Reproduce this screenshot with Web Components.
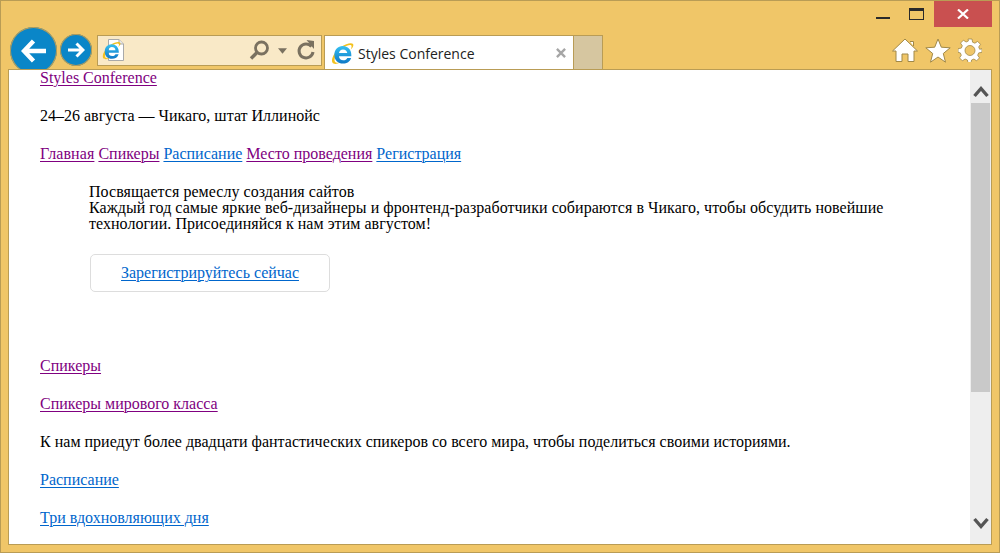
<!DOCTYPE html>
<html lang="ru"><head><meta charset="utf-8"><title>Styles Conference</title>
<style>html,body{margin:0;padding:0;background:#f0c668}</style></head>
<body>
<ie-window>
  <caption-buttons slot="caption"></caption-buttons>
  <nav-buttons slot="nav"></nav-buttons>
  <address-box slot="nav"></address-box>
  <tab-strip slot="nav" label="Styles Conference"></tab-strip>
  <tool-icons slot="nav"></tool-icons>
  <page-content slot="page"></page-content>
  <v-scrollbar slot="page"></v-scrollbar>
</ie-window>
<script>
const IE_LOGO = `<svg viewBox="0 0 24 24" width="WW" height="WW" aria-hidden="true">
<defs><linearGradient id="g" x1="0" y1="0" x2="0" y2="1"><stop offset="0" stop-color="#35c0f2"/><stop offset="1" stop-color="#0e78c6"/></linearGradient></defs>
<path d="M23 2.200C21.500 .3 16 1.500 10 5.500 4 9.800-.5 18 1.500 21.500c1.300 2.200 5 1.800 8 0-3 .5-5.200.1-5.700-1.700C3 16.500 7 10 12 6.500c4.500-3.300 8-3.900 9-3.100.8.6.5 2.600-.5 4.600 2-2 3.500-4.300 2.500-5.800z" fill="#f3c11c"/>
<path d="M12.200 4.200c5.300 0 9 3.900 9 9.300v1.300H8.300c.2 2.700 2 4.200 4.500 4.200 2 0 3.500-.9 4.200-2.400h4c-1.100 3.700-4.300 5.900-8.400 5.900-5.400 0-9.100-3.700-9.100-9 0-5.600 3.700-9.300 8.700-9.300zm4.800 7.400c-.2-2.300-2-3.900-4.500-3.900-2.300 0-3.900 1.500-4.200 3.900z" fill="url(#g)" fill-rule="evenodd"/>
</svg>`;
function def(name, html, init){
  customElements.define(name, class extends HTMLElement{
    constructor(){super();this.attachShadow({mode:'open'}).innerHTML=html;}
    connectedCallback(){ if(init) init(this); }
  });
}
def('ie-window',`<style>
:host{display:flex;flex-direction:column;box-sizing:border-box;width:1000px;height:553px;background:#f0c668;border:1px solid #b99c55;overflow:hidden;padding:0 7px 7px 7px}
.cap{display:flex;justify-content:flex-end;height:26px;flex:none}
.nav{display:flex;align-items:flex-start;height:42px;flex:none;position:relative}
.page{display:flex;flex:1;min-height:0;background:#fff;border:1px solid #b99c55;position:relative;z-index:1}
</style>
<div class="cap"><slot name="caption"></slot></div>
<div class="nav"><slot name="nav"></slot></div>
<div class="page"><slot name="page"></slot></div>`);

def('caption-buttons',`<style>
:host{display:flex;align-items:flex-start}
.b{height:26px;display:flex;align-items:center;justify-content:center}
.min{width:30px}.max{width:36px}.close{width:58px;background:#c95050}
svg{display:block}
</style>
<div class="b min"><svg width="14" height="14" viewBox="0 0 14 14"><rect y="10" width="14" height="2" fill="#2a2a2a"/></svg></div>
<div class="b max"><svg width="15" height="13" viewBox="0 0 15 13"><rect x=".5" y=".5" width="14" height="11" fill="none" stroke="#2a2a2a"/><rect width="15" height="3" fill="#2a2a2a"/></svg></div>
<div class="b close"><svg width="12" height="10" viewBox="0 0 12 10" style="margin-top:-1px"><path d="M1 .5 11 9.500M11 .5 1 9.500" stroke="#fff" stroke-width="2.200" fill="none"/></svg></div>`);

def('nav-buttons',`<style>
:host{display:flex;align-items:flex-start;flex:none;padding-left:2px;height:42px;width:89px;box-sizing:border-box}
.c{border-radius:50%;background:#0a86c8;box-shadow:0 0 0 1px #b99c55 inset;display:flex;align-items:center;justify-content:center;flex:none;box-sizing:border-box}
.back{width:47px;height:47px}
.fwd{width:32px;height:32px;margin:7px 0 0 3px}
svg{display:block}
</style>
<div class="c back"><svg width="26" height="24" viewBox="0 0 26 24"><path d="M12.500 2 3 12l9.500 10M3.500 12H25" fill="none" stroke="#fff" stroke-width="4.500"/></svg></div>
<div class="c fwd"><svg width="18" height="16" viewBox="0 0 18 16"><path d="M9.500 1.500 16 8l-6.500 6.500M16 8H1" fill="none" stroke="#fff" stroke-width="3"/></svg></div>`);

def('address-box',`<style>
:host{display:flex;align-items:center;flex:none;box-sizing:border-box;width:225px;height:31px;margin-top:8px;background:#f9e9c7;border:1px solid #b99c55;padding:0 5px 0 4px}
.page{position:relative;width:23px;height:25px;flex:none}
.sp{flex:1}
svg{display:block}
.s{margin-right:8px}.a{margin-right:9px}
</style>
<div class="page">
<svg width="23" height="25" viewBox="0 0 23 25"><path d="M6.500 1.500H17l4.500 4.500v16.500h-15z" fill="#fff" stroke="#a9a9a9"/><path d="M17 1.500V6h4.500" fill="#e8e8e8" stroke="#a9a9a9"/></svg>
<span id="l" style="position:absolute;left:0;top:3px"></span></div>
<div class="sp"></div>
<svg class="s" width="21" height="21" viewBox="0 0 21 21"><circle cx="12.500" cy="8" r="6" fill="none" stroke="#7a7160" stroke-width="2.800"/><path d="M8 12.500 2 18.500" stroke="#7a7160" stroke-width="3.400"/></svg>
<svg class="a" width="9" height="6" viewBox="0 0 10 6"><path d="M0 0h10L5 6z" fill="#7a7160"/></svg>
<svg width="20" height="22" viewBox="0 0 20 22"><path d="M15.500 6.500A7 7 0 1 0 17 12" fill="none" stroke="#7a7160" stroke-width="3"/><path d="M10.500 0 18 1v8z" fill="#7a7160"/></svg>`,
el=>{el.shadowRoot.getElementById('l').innerHTML=IE_LOGO.replace(/WW/g,'19');});

def('tab-strip',`<style>
:host{display:flex;flex:none;margin:8px 0 0 2px;height:35px;font:14px "Open Sans","Noto Sans",sans-serif;color:#222}
.tab{box-sizing:border-box;width:250px;height:35px;background:#fff;border:1px solid #b99c55;border-bottom:0;display:flex;align-items:center;padding:0 7px 0 6px}
.logo{flex:none;width:23px;height:23px;margin-right:4px}
.t{flex:1;white-space:nowrap}
.new{box-sizing:border-box;width:29px;height:35px;background:#d6c6a0;border:1px solid #b99c55;border-left:0;border-bottom:0}
svg{display:block}
</style>
<div class="tab"><span class="logo" id="l"></span><span class="t" id="t"></span>
<svg width="10" height="10" viewBox="0 0 11 11"><path d="M1 1l9 9M10 1l-9 9" stroke="#a6a6a6" stroke-width="2.600"/></svg></div>
<div class="new"></div>`,
el=>{el.shadowRoot.getElementById('l').innerHTML=IE_LOGO.replace(/WW/g,'23');
el.shadowRoot.getElementById('t').textContent=el.getAttribute('label');});

def('tool-icons',`<style>
:host{display:flex;flex:1;justify-content:flex-end;align-items:center;gap:7px;height:34px;margin-top:6px;padding-right:10px}
svg{display:block}
</style>
<svg width="26" height="25" viewBox="0 0 26 25"><path d="M13 1 25.500 13H22v10.500h-6V16h-6v7.500H4V13H.5zM18 3.500h3.500V8" fill="#fff" stroke="#a08848" stroke-width="1"/></svg>
<svg width="26" height="25" viewBox="0 0 26 25"><path d="M13 1l3.300 8.200 8.900.6-6.900 5.700 2.200 8.700L13 19l-7.500 5.200 2.200-8.700L.8 9.800l8.900-.6z" fill="#fff" stroke="#a08848" stroke-width="1"/></svg>
<svg width="24" height="24" viewBox="0 0 24 24"><path fill-rule="evenodd" d="M10 1h4l.6 3.200 2.300 1 2.700-1.800 2.900 2.900-1.800 2.700 1 2.300L24 10.700v3.600l-3.300.6-1 2.300 1.800 2.700-2.900 2.900-2.700-1.800-2.300 1-.6 3H10l-.6-3-2.300-1-2.700 1.800-2.900-2.900 1.800-2.700-1-2.300L0 14.300v-3.600l3.300-.6 1-2.300L2.500 5.100l2.900-2.900 2.700 1.800 2.300-1zM12 7.500a5 5 0 1 0 0 10 5 5 0 0 0 0-10z" fill="#fff" stroke="#a08848" stroke-width=".8"/></svg>`);

def('page-content',`<style>
:host{display:block;flex:1;min-width:0;overflow:hidden;padding:0 0 0 31px;font:16px/18px "Liberation Serif","Times New Roman",serif;color:#000}
a{text-decoration:underline;text-underline-offset:2px;text-decoration-thickness:1px}
.v{color:#800080}.l{color:#0066cc}
p{margin:0 0 20px}
.top{margin-top:-1px}
.first{letter-spacing:.1px}
.hero{margin:21px 48px 0 49px;line-height:16px;letter-spacing:.04px}
.hero p{margin:0}
.cta{display:flex;justify-content:center;box-sizing:border-box;width:240px;height:38px;margin:22px 0 0 1px;border:1px solid #ddd;border-radius:5px;align-items:center;line-height:18px;letter-spacing:-.03px}
.gap{height:65px}
.wide{letter-spacing:.01px}
</style>
<p class="top"><a class="v" href="#">Styles Conference</a></p>
<p>24–26 августа — Чикаго, штат Иллинойс</p>
<p style="margin-bottom:0"><a class="v first" href="#">Главная</a> <a class="v" href="#">Спикеры</a> <a class="l" href="#">Расписание</a> <a class="v" href="#">Место проведения</a> <a class="l" href="#">Регистрация</a></p>
<div class="hero"><p>Посвящается ремеслу создания сайтов</p><p>Каждый год самые яркие веб-дизайнеры и фронтенд-разработчики собираются в Чикаго, чтобы обсудить новейшие технологии. Присоединяйся к нам этим августом!</p>
<div class="cta"><a class="l" href="#">Зарегистрируйтесь сейчас</a></div></div>
<div class="gap"></div>
<p><a class="v" href="#">Спикеры</a></p>
<p><a class="v" href="#">Спикеры мирового класса</a></p>
<p class="wide">К нам приедут более двадцати фантастических спикеров со всего мира, чтобы поделиться своими историями.</p>
<p><a class="l" href="#">Расписание</a></p>
<p><a class="l" href="#">Три вдохновляющих дня</a></p>`);

def('v-scrollbar',`<style>
:host{display:flex;flex-direction:column;align-items:center;flex:none;width:21px;background:#eee;box-sizing:border-box;padding:0 1px}
.btn{height:33px;flex:none;width:100%;display:flex;align-items:center;justify-content:center;box-sizing:border-box;padding-top:10px}
.thumb{height:289px;width:100%;background:#c9c9c9;flex:none}
.sp{flex:1}
.down{height:44px;padding-top:3px}
svg{display:block}
</style>
<div class="btn"><svg width="16" height="13" viewBox="0 0 16 13"><path d="M1.500 11 8 3.500 14.500 11" fill="none" stroke="#555" stroke-width="3.400"/></svg></div>
<div class="thumb"></div><div class="sp"></div>
<div class="btn down"><svg width="16" height="13" viewBox="0 0 16 13"><path d="M1.500 2 8 9.500 14.500 2" fill="none" stroke="#555" stroke-width="3.400"/></svg></div>`);
</script>
</body></html>
